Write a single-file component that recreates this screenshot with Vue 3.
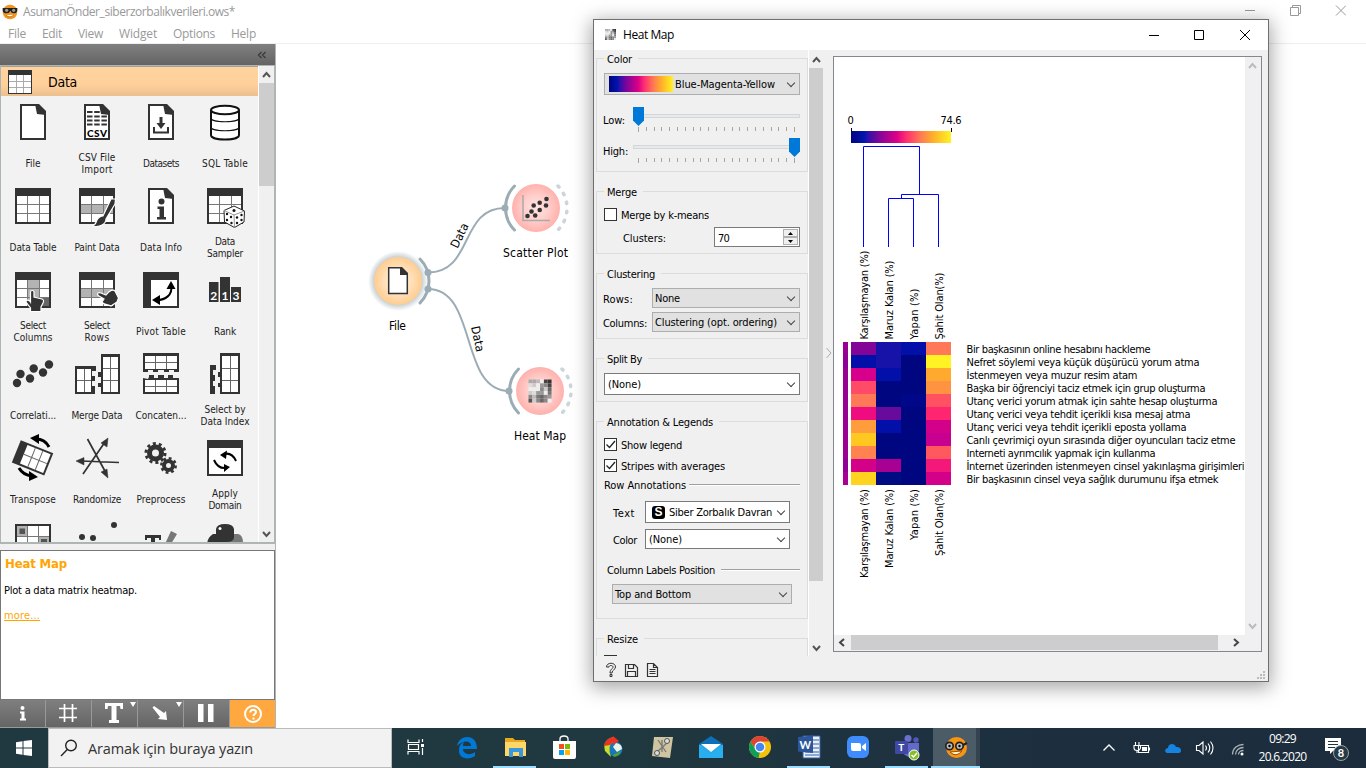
<script setup>
const vFit = {
  mounted(el, { value }) {
    const range = document.createRange()
    range.selectNodeContents(el)
    const natural = range.getBoundingClientRect().width
    el.style.letterSpacing = (value - natural) / el.textContent.length + 'px'
  },
}

const menus = [['File', 18, 16], ['Edit', 20, 16], ['View', 25, 16], ['Widget', 38, 16], ['Options', 42, 16], ['Help', 25, 0]]

const widgets = [
  { icon: 'file', lines: [['File', 15]] },
  { icon: 'csv', lines: [['CSV File', 37], ['Import', 31]] },
  { icon: 'datasets', lines: [['Datasets', 36]] },
  { icon: 'sql', lines: [['SQL Table', 46]] },
  { icon: 'table', lines: [['Data Table', 47]] },
  { icon: 'paint', lines: [['Paint Data', 45]] },
  { icon: 'info', lines: [['Data Info', 42]] },
  { icon: 'sampler', lines: [['Data', 20], ['Sampler', 36]] },
  { icon: 'columns', lines: [['Select', 26], ['Columns', 39]] },
  { icon: 'rows', lines: [['Select', 26], ['Rows', 25]] },
  { icon: 'pivot', lines: [['Pivot Table', 50]] },
  { icon: 'rank', lines: [['Rank', 22]] },
  { icon: 'corr', lines: [['Correlati...', 46]] },
  { icon: 'merge', lines: [['Merge Data', 51]] },
  { icon: 'concat', lines: [['Concaten...', 51]] },
  { icon: 'index', lines: [['Select by', 41], ['Data Index', 49]] },
  { icon: 'transpose', lines: [['Transpose', 46]] },
  { icon: 'random', lines: [['Randomize', 48]] },
  { icon: 'gears', lines: [['Preprocess', 49]] },
  { icon: 'apply', lines: [['Apply', 26], ['Domain', 33]] },
  { icon: 'impute', lines: [] },
  { icon: 'outliers', lines: [] },
  { icon: 'edit', lines: [] },
  { icon: 'python', lines: [] },
]
const isTable = (n) => ['table', 'paint', 'sampler', 'columns', 'rows'].includes(n)
const isPage = (n) => ['file', 'csv', 'datasets', 'info'].includes(n)

const ticks = Array.from({ length: 21 }, (_, i) => 5.5 + i * 7.8)

const heat = [
  ['#820598', '#1713a8', '#0210a9', '#ff7858'],
  ['#0210a9', '#1713a8', '#000580', '#fff324'],
  ['#d7008c', '#0210a9', '#000580', '#ffaa2e'],
  ['#ff4b68', '#000580', '#000580', '#ff9341'],
  ['#ff7858', '#000580', '#000788', '#ff5162'],
  ['#ef0b80', '#680a9c', '#000580', '#ff266f'],
  ['#ff9c3b', '#0210a9', '#000580', '#d3008a'],
  ['#ffc821', '#000580', '#000580', '#c70090'],
  ['#ff8250', '#000580', '#000580', '#ff585f'],
  ['#d3008a', '#a80093', '#000580', '#f4187a'],
  ['#ffd41f', '#000c82', '#000580', '#d3008a'],
]
const stripes = ['#970091', '#8f0096', '#970091', '#970091', '#970091', '#970091', '#9b0090', '#9b0090', '#9b0090', '#900095', '#a80093']
const rowLabels = [
  ['Bir başkasının online hesabını hackleme', 184],
  ['Nefret söylemi veya küçük düşürücü yorum atma', 233],
  ['İstenmeyen veya muzur resim atam', 171],
  ['Başka bir öğrenciyi taciz etmek için grup oluşturma', 239],
  ['Utanç verici yorum atmak için sahte hesap oluşturma', 251],
  ['Utanç verici veya tehdit içerikli kısa mesaj atma', 224],
  ['Utanç verici veya tehdit içerikli eposta yollama', 220],
  ['Canlı çevrimiçi oyun sırasında diğer oyuncuları taciz etme', 269],
  ['Interneti ayrımcılık yapmak için kullanma', 189],
  ['İnternet üzerinden istenmeyen cinsel yakınlaşma girişimleri', 278],
  ['Bir başkasının cinsel veya sağlık durumunu ifşa etmek', 252],
]
const colLabels = [
  ['Karşılaşmayan (%)', 89],
  ['Maruz Kalan (%)', 79],
  ['Yapan (%)', 51],
  ['Şahit Olan(%)', 67],
]
const mosaic = ['aabe43', 'dce984', 'eee8c6', 'cd99e7', '8b7689', '5c868e']
const mosaicCells = mosaic.flatMap((row, y) => [...row].map((c, x) => ({ x, y, c: '#' + c + c + c })))
const tasks = ['view', 'edge', 'folder', 'store', 'ball', 'script', 'mail', 'chrome', 'word', 'zoom', 'teams', 'orange']
const openTasks = ['folder', 'word', 'teams', 'orange']
</script>

<template>
  <div class="screen">
    <header class="titlebar">
      <svg class="appicon" width="16" height="16" viewBox="0 0 24 24">
        <circle cx="12" cy="12" r="11" fill="#f7941d" />
        <path d="M6 17Q12 22 18 16" fill="#fff" stroke="#a85000" />
        <path d="M1 6H23V10Q22 14 18 14Q14 14 12.500 10Q11 14 7 14Q2 14 1 10Z" fill="#222" />
        <circle cx="7" cy="9.500" r="2.400" fill="#999" /><circle cx="17.500" cy="9.500" r="2.400" fill="#999" />
      </svg>
      <span v-fit="212" class="apptitle">AsumanÖnder_siberzorbalıkverileri.ows*</span>
      <svg class="wincontrols" width="101" height="12" viewBox="0 0 101 12" fill="none" stroke="#999">
        <path d="M0 6.500H10M45.500 3.500H53.500V11.500H45.500ZM47.500 3.500V1.500H55.500V9.500H53.500M91 1.500L101 11.500M101 1.500L91 11.500" />
      </svg>
    </header>
    <nav class="menubar">
      <span v-for="m in menus" :key="m[0]" class="menuitem" :style="{ width: m[1] + m[2] + 'px' }"><span v-fit="m[1]">{{ m[0] }}</span></span>
    </nav>

    <main class="workspace">
      <aside class="sidebar">
        <div class="dockhead">
          <svg width="10" height="8" viewBox="0 0 10 8" fill="none" stroke="#3a3a3a" stroke-width="1.300"><path d="M4.500 1L1.500 4L4.500 7M8.500 1L5.500 4L8.500 7" /></svg>
        </div>
        <div class="toolbox">
          <div class="toolmain">
            <div class="category">
              <svg width="24" height="24" viewBox="0 0 24 24">
                <rect width="24" height="24" fill="#333" /><path d="M1 5H23V23H1Z" fill="#fff" />
                <path d="M1 11.500H23M1 17.500H23M8.500 5V23M15.500 5V23" stroke="#aaa" />
              </svg>
              <span v-fit="29">Data</span>
            </div>
            <div class="grid">
              <div v-for="w in widgets" :key="w.icon" class="cell">
                <svg class="wicon" width="48" height="48" viewBox="0 0 48 48">
                  <g v-if="isTable(w.icon)">
                    <rect x="6" y="6" width="36" height="36" fill="#333" /><rect x="8" y="14" width="32" height="26" fill="#fff" />
                    <rect v-if="w.icon === 'paint' || w.icon === 'rows'" x="8" y="22.500" width="32" height="9" fill="#b3b3b3" />
                    <rect v-if="w.icon === 'columns'" x="18.500" y="14" width="12" height="26" fill="#b3b3b3" />
                    <rect v-if="w.icon === 'columns'" x="30.500" y="31.500" width="9.500" height="8.500" fill="#666" />
                    <path d="M8 22.500H40M8 31.500H40M18.500 14V40M30.500 14V40" stroke="#777" />
                  </g>
                  <g v-if="isPage(w.icon)">
                    <path d="M12 7H28L36 14V41H12Z" fill="#fff" stroke="#333" stroke-width="2" />
                    <path d="M26 6H30L37 13V17L28 16Z" fill="#333" />
                  </g>
                  <g v-if="w.icon === 'csv'">
                    <path d="M14 14H27M14 18.500H34M14 22.500H34M14 26.500H34" stroke="#333" stroke-width="2" stroke-dasharray="5.500 1.700" />
                    <text x="14" y="38.500" font-size="10" font-weight="900" textLength="20" class="lato">CSV</text>
                  </g>
                  <g v-else-if="w.icon === 'datasets'" fill="#333">
                    <path d="M22.500 19H25.500V25H28.500L24 31L19.500 25H22.500Z" /><path d="M17 29V34.500H31V29" fill="none" stroke="#333" stroke-width="2" />
                  </g>
                  <g v-else-if="w.icon === 'sql'" fill="#fff" stroke="#111" stroke-width="2">
                    <path d="M10 12V37C10 43 38 43 38 37V12" /><ellipse cx="24" cy="12" rx="14" ry="4.200" />
                    <path d="M10 20C10 25 38 25 38 20M10 29C10 34 38 34 38 29" fill="none" stroke-width="1.200" />
                  </g>
                  <path v-else-if="w.icon === 'paint'" d="M38 17L42.500 17L42 22L33 37C33 42 27 46 19 44C23 43 23 40 24 38C26 35 28 34 30 34Z" fill="#333" stroke="#fff" stroke-width="1.200" />
                  <g v-else-if="w.icon === 'info'" fill="#333">
                    <circle cx="24.500" cy="19.500" r="3" /><path d="M20.500 24.500H27V35H29V37.500H20V35H22.500V27H20.500Z" />
                  </g>
                  <g v-else-if="w.icon === 'sampler'" stroke="#222" stroke-width="1" fill="#fff">
                    <path d="M33 24L43.500 29L43 40L33.500 45.500L23.500 40L23 28.500Z" /><path d="M23 28.500L33 33L43.500 29M33 33L33.500 45.500" fill="none" stroke="#999" />
                    <g fill="#111" stroke="none"><circle cx="33" cy="28.500" r="1.500" /><circle cx="26" cy="32" r="1.200" /><circle cx="26" cy="38" r="1.200" /><circle cx="30" cy="35" r="1.200" /><circle cx="30.500" cy="41" r="1.200" /><circle cx="36" cy="35.500" r="1.200" /><circle cx="36" cy="41" r="1.200" /><circle cx="40.500" cy="33" r="1.200" /><circle cx="40.500" cy="38" r="1.200" /></g>
                  </g>
                  <path v-else-if="w.icon === 'columns'" d="M21.500 26C21.500 24 25 24 25 26V31L33 33C35 34 35 35 34 37L32 41V45.500H21.500V42L17 36C17 33.500 20 33.500 21.500 36Z" fill="#333" stroke="#fff" stroke-width="1.200" />
                  <path v-else-if="w.icon === 'rows'" d="M25 27C24 28.500 25 29.500 26 30L31 33L29 36C30 39 35 38 38 40L44 36L45.500 32L42 25C40 23 37 24 33 29L28 27C27 26.400 26 26.500 25 27Z" fill="#333" stroke="#fff" stroke-width="1.200" />
                  <g v-else-if="w.icon === 'pivot'">
                    <rect x="6" y="6" width="36" height="36" fill="#333" /><rect x="14" y="14" width="26" height="26" fill="#fff" />
                    <path d="M34 20C36 29 28 34 20 34" fill="none" stroke="#000" stroke-width="2" /><path d="M34 15L38.500 23L29.500 23ZM15 34L23 29V39Z" />
                  </g>
                  <g v-else-if="w.icon === 'rank'">
                    <path d="M8 16H17.500V36H8ZM19 11H29V36H19ZM30 21H40V36H30Z" fill="#333" />
                    <g fill="#fff" font-size="12" font-weight="bold" class="lato"><text x="9.300" y="33.500">2</text><text x="20.500" y="33.500">1</text><text x="31.500" y="33.500">3</text></g>
                  </g>
                  <g v-else-if="w.icon === 'corr'" fill="#333">
                    <circle cx="8" cy="33" r="4.200" /><circle cx="11.500" cy="24" r="4.200" /><circle cx="21" cy="28.500" r="4.200" /><circle cx="24.700" cy="18.500" r="4.200" /><circle cx="34" cy="22.500" r="4.200" /><circle cx="40" cy="14.500" r="4.200" />
                  </g>
                  <g v-else-if="w.icon === 'merge'" fill="#333">
                    <path d="M2 16H23V21H19V26H22V31H19V36H22V44H2ZM28 4H47V44H28V37H25V33H28V27H25V22H28V17L28 15Z" />
                    <path d="M4 19H18V42H4ZM30 7H45V42H30Z" fill="#fff" /><path d="M4 30.500H18M11.500 19V42M30 18.500H45M30 30.500H45M37.500 7V42" stroke="#666" />
                  </g>
                  <g v-else-if="w.icon === 'concat'" fill="#333">
                    <path d="M6 3H42V22H37V20H32V22H27V20H21V22H16V20H11V22H6ZM6 28L11 29L12 27V25H17V28H21V25H27V28H31V25H36V28H42V44H6Z" />
                    <path d="M8 6H40V19H8ZM8 30H40V42H8Z" fill="#fff" /><path d="M8 12.500H40M8 36.500H40M18.500 6V19M29.500 6V19M18.500 30V42M29.500 30V42" stroke="#666" />
                  </g>
                  <g v-else-if="w.icon === 'index'" fill="#333">
                    <path d="M9 15H15V20H12V25H14V31H12V36H14V44H9ZM19 3H39V44H19V37H17V33H19V27H17V22H19Z" />
                    <path d="M21 6H37V42H21Z" fill="#fff" /><path d="M29.500 6V42M21 18.500H37M21 30.500H37" stroke="#666" />
                  </g>
                  <g v-else-if="w.icon === 'transpose'">
                    <g transform="rotate(22 24 24)"><rect x="6" y="12" width="35" height="24" fill="#333" /><path d="M14 14H39V34H14Z" fill="#fff" /><path d="M14 24H39M22.500 14V34M30.500 14V34" stroke="#666" /></g>
                    <path d="M27 5Q36 5 40 13M10 34Q14 41 23 42" fill="none" stroke="#000" stroke-width="3" /><path d="M21 4L30 0V10ZM29 43L20 37V47Z" />
                  </g>
                  <g v-else-if="w.icon === 'random'" stroke="#333" stroke-width="1.700" fill="#333">
                    <path d="M10 40L32 8M14.500 5L33 39M8 27L46 28.500" /><path d="M35 4L34 13L28 9ZM35 44L28 38L34 35ZM3 27L11 23.500V31Z" stroke-width=".5" />
                  </g>
                  <g v-else-if="w.icon === 'gears'" fill="none" stroke="#333">
                    <circle cx="18.500" cy="19" r="6" stroke-width="5" /><circle cx="18.500" cy="19" r="9.500" stroke-width="3" stroke-dasharray="3 2.970" />
                    <circle cx="31.500" cy="31.500" r="4.500" stroke-width="4" /><circle cx="31.500" cy="31.500" r="7.200" stroke-width="2.500" stroke-dasharray="2.800 2.855" />
                  </g>
                  <g v-else-if="w.icon === 'apply'">
                    <rect x="6" y="6" width="36" height="36" fill="#333" /><rect x="8" y="14" width="32" height="26" fill="#fff" />
                    <path d="M23 20Q31 18 35 27M13 26Q17 35 25 34" fill="none" stroke="#000" stroke-width="2" /><path d="M19 21L26 16.500L25 25ZM29 33L23 30V38Z" />
                  </g>
                  <g v-else-if="w.icon === 'impute'">
                    <rect x="6" y="6" width="36" height="36" fill="#333" /><rect x="8" y="8" width="32" height="32" fill="#fff" />
                    <path d="M8 8H18V18H8ZM30 19H40V30H30Z" fill="#b3b3b3" /><path d="M10.500 10.500H16V16H10.500ZM32 21H38V28H32Z" fill="#555" /><path d="M18.500 8V40M29.500 8V40M8 18.500H40" stroke="#777" />
                  </g>
                  <g v-else-if="w.icon === 'outliers'" fill="#333"><circle cx="41" cy="7" r="3" /><circle cx="9" cy="19" r="3" /><circle cx="20" cy="20" r="3" /></g>
                  <g v-else-if="w.icon === 'edit'" fill="#333"><path d="M8 17H24V22H22V20H18V32H14V20H10V22H8Z" /><path d="M34 13L40 16L34 26H28Z" fill="#777" /></g>
                  <g v-else-if="w.icon === 'python'"><path d="M30 16H37Q42 17 42 25V30H25Z" fill="#777" /><path d="M15 16V11Q16 6 24 6Q32 6 33 11V20Q32 24 26 24H18V34H8Q3 22 12 16Z" fill="#333" /><circle cx="19" cy="10.500" r="1.500" fill="#fff" /></g>
                </svg>
                <div class="wlabel"><div v-for="l in w.lines" :key="l[0]"><span v-fit="l[1]">{{ l[0] }}</span></div></div>
              </div>
            </div>
          </div>
          <div class="vscroll">
            <svg width="16" height="16" viewBox="0 0 16 16" fill="none" stroke="#555" stroke-width="2"><path d="M4 11L7.500 7L11 11" /></svg>
            <div class="thumb side"></div>
            <svg width="16" height="16" viewBox="0 0 16 16" fill="none" stroke="#555" stroke-width="2"><path d="M4 6L7.500 10L11 6" /></svg>
          </div>
        </div>
        <div class="splitter"></div>
        <section class="help">
          <h3><span v-fit="62">Heat Map</span></h3>
          <p><span v-fit="133">Plot a data matrix heatmap.</span></p>
          <a><span v-fit="36">more...</span></a>
        </section>
        <div class="tools">
          <div class="tool"><svg width="46" height="28" viewBox="0 0 46 28" fill="#fff"><circle cx="22.500" cy="8" r="2" /><path d="M20 11.500H24.500V18.500H26V20.500H20V18.500H21.500V13.500H20Z" /></svg></div>
          <div class="tool"><svg width="46" height="28" viewBox="0 0 46 28" stroke="#fff" stroke-width="1.700"><path d="M18.500 4V22M26.500 4V22M13 8.500H31M13 17.500H31" /></svg></div>
          <div class="tool"><svg width="46" height="28" viewBox="0 0 46 28" fill="#fff"><path d="M13 3H31V9H28.500L28 6H24.500V20H27V23H17V20H19.500V6H16L15.500 9H13ZM38 2H44L41 7Z" /></svg></div>
          <div class="tool"><svg width="46" height="28" viewBox="0 0 46 28" fill="#fff"><path d="M16 6L26 13L28 11L29 20L20 19L22 17L14.500 7.500ZM38 2H44L41 7Z" /></svg></div>
          <div class="tool"><svg width="46" height="28" viewBox="0 0 46 28" fill="#fff"><path d="M14 4H19.500V22H14ZM24 4H29.500V22H24Z" /></svg></div>
          <div class="tool on"><svg width="46" height="28" viewBox="0 0 46 28" fill="none" stroke="#fff" stroke-width="2"><circle cx="23" cy="14" r="8" /><path d="M20.500 12.500C20 9 26 9 26 12C26 14 23.500 14 23.500 16" /><path d="M23.500 17.500V19.500" /></svg></div>
        </div>
      </aside>

      <svg class="canvas" width="1090" height="684" viewBox="276 44 1090 684">
        <defs>
          <radialGradient id="pink"><stop offset="0" stop-color="#ffe3e1" /><stop offset=".5" stop-color="#ffd0cd" /><stop offset="1" stop-color="#ffb1ac" /></radialGradient>
          <radialGradient id="peach"><stop offset="0" stop-color="#fff1e2" /><stop offset=".5" stop-color="#ffe2c0" /><stop offset="1" stop-color="#ffcd90" /></radialGradient>
          <radialGradient id="halo"><stop offset=".76" stop-color="#9cacb4" stop-opacity=".65" /><stop offset="1" stop-color="#9cacb4" stop-opacity="0" /></radialGradient>
        </defs>
        <g fill="none" stroke="#9cacb4" stroke-width="2">
          <path d="M428 272.500C474 272.500 459 208 505 208M428 289C478 289 459 391 509 391" />
          <path d="M420 259A31.400 31.400 0 0 1 420 303M514.500 186A31.400 31.400 0 0 0 514.500 230M518.500 369A31.400 31.400 0 0 0 518.500 413" stroke-width="3" stroke-linecap="round" />
          <path d="M558 186A31.400 31.400 0 0 1 558 230M562 369A31.400 31.400 0 0 1 562 413" stroke="#ccd5da" stroke-width="3.500" stroke-linecap="round" stroke-dasharray="1.500 7.700" />
        </g>
        <g fill="#9cacb4"><circle cx="428" cy="272.500" r="3.500" /><circle cx="428" cy="289" r="3.500" /><circle cx="505" cy="208" r="3.500" /><circle cx="509" cy="391" r="3.500" /></g>
        <circle cx="398" cy="281" r="30" fill="url(#halo)" />
        <circle cx="398" cy="281" r="24" fill="url(#peach)" /><circle cx="536" cy="208" r="24" fill="url(#pink)" /><circle cx="540" cy="391" r="24" fill="url(#pink)" />
        <path d="M388.700 267.700H401L407.300 274V293.500H388.700Z" fill="#fff" stroke="#333" stroke-width="1.500" /><path d="M400 267H402L408 273V275H400Z" fill="#333" />
        <path d="M523 195V220.500H550" fill="none" stroke="#aaa" stroke-width="1.500" />
        <g fill="#333"><circle cx="527.500" cy="216" r="2.300" /><circle cx="531.500" cy="211.500" r="2.300" /><circle cx="535.200" cy="215.500" r="2.300" /><circle cx="533.700" cy="205.500" r="2.300" /><circle cx="539.700" cy="202.700" r="2.300" /><circle cx="539.700" cy="210" r="2.300" /><circle cx="546" cy="205.500" r="2.300" /><circle cx="546.500" cy="199" r="2.300" /></g>
        <rect v-for="m in mosaicCells" :key="m.x + '-' + m.y" :x="528.500 + m.x * 3.850" :y="379.500 + m.y * 3.850" width="3.800" height="3.800" :fill="m.c" />
        <g class="nodetext">
          <text x="389" y="330" textLength="17">File</text><text x="503" y="257" textLength="65">Scatter Plot</text><text x="514" y="440" textLength="52">Heat Map</text>
          <text transform="translate(457.500 249) rotate(-64)" textLength="26">Data</text><text transform="translate(471 327) rotate(78)" textLength="26">Data</text>
        </g>
      </svg>
    </main>

    <section class="dialog">
      <header class="dtitle">
        <svg width="11" height="11" viewBox="0 0 6 6"><rect v-for="m in mosaicCells" :key="m.x + '-' + m.y" :x="m.x" :y="m.y" width="1.050" height="1.050" :fill="m.c" /></svg>
        <span v-fit="51">Heat Map</span>
        <svg class="dcontrols" width="101" height="12" viewBox="0 0 101 12" fill="none" stroke="#000"><path d="M0 6.500H10M45.500 1.500H54.500V10.500H45.500ZM91 1L101 11M101 1L91 11" /></svg>
      </header>
      <div class="dbody">
        <div class="controls">
          <div class="scrollarea">
            <div class="groups">
              <div class="group color">
                <div class="gtitle"><span v-fit="25">Color</span></div>
                <div class="combo tall"><i class="ramp"></i><span v-fit="100">Blue-Magenta-Yellow</span><b class="chev"></b></div>
                <div v-for="s in [['Low:', 22, 0], ['High:', 25, 156]]" :key="s[0]" class="sliderrow">
                  <span v-fit="s[1]">{{ s[0] }}</span>
                  <svg width="167" height="26" viewBox="0 0 167 26">
                    <rect x=".5" y="7.500" width="166" height="3" fill="#e7eaea" stroke="#d3d7d7" />
                    <path v-for="(t, i) in ticks" :key="i" :d="'M' + (Math.floor(t) + .5) + ' 20V' + (i % 20 ? 24 : 25)" stroke="#aaa496" />
                    <path :transform="'translate(' + s[2] + ' 0)'" d="M0 0H11V13.500L5.500 19L0 13.500Z" fill="#0078d7" />
                  </svg>
                </div>
              </div>
              <div class="group merge">
                <div class="gtitle"><span v-fit="30">Merge</span></div>
                <div class="check"><i class="box"></i><span v-fit="88">Merge by k-means</span></div>
                <div class="spinrow"><span v-fit="43">Clusters:</span>
                  <div class="spin"><span v-fit="11">70</span><div class="spinbtns"><i><svg width="5" height="3"><path d="M0 3H5L2.500 0Z" /></svg></i><i><svg width="5" height="3"><path d="M0 0H5L2.500 3Z" /></svg></i></div></div>
                </div>
              </div>
              <div class="group clustering">
                <div class="gtitle"><span v-fit="48">Clustering</span></div>
                <div class="formrow"><label><span v-fit="30">Rows:</span></label><div class="combo"><span v-fit="25">None</span><b class="chev"></b></div></div>
                <div class="formrow"><label><span v-fit="44">Columns:</span></label><div class="combo"><span v-fit="122">Clustering (opt. ordering)</span><b class="chev"></b></div></div>
              </div>
              <div class="group split">
                <div class="gtitle"><span v-fit="35">Split By</span></div>
                <div class="combo tall white"><span v-fit="33">(None)</span><b class="chev"></b></div>
              </div>
              <div class="group annotation">
                <div class="gtitle"><span v-fit="106">Annotation &amp; Legends</span></div>
                <div class="check"><i class="box"><svg width="11" height="11"><path d="M1.500 5.500L4.500 8.500L10 2" fill="none" stroke="#222" stroke-width="1.300" /></svg></i><span v-fit="61">Show legend</span></div>
                <div class="check second"><i class="box"><svg width="11" height="11"><path d="M1.500 5.500L4.500 8.500L10 2" fill="none" stroke="#222" stroke-width="1.300" /></svg></i><span v-fit="104">Stripes with averages</span></div>
                <div class="rule first"><span v-fit="82">Row Annotations</span><hr /></div>
                <div class="annrow text"><label><span v-fit="22">Text</span></label><div class="combo tall white"><em class="sicon">S</em><span v-fit="103">Siber Zorbalık Davran</span><b class="chev"></b></div></div>
                <div class="annrow colour"><label><span v-fit="24">Color</span></label><div class="combo white"><span v-fit="33">(None)</span><b class="chev"></b></div></div>
                <div class="rule last"><span v-fit="108">Column Labels Position</span><hr /></div>
                <div class="combo pos"><span v-fit="76">Top and Bottom</span><b class="chev"></b></div>
              </div>
              <div class="group resize">
                <div class="gtitle"><span v-fit="31">Resize</span></div>
                <div class="check"><i class="box"></i></div>
              </div>
            </div>
            <div class="vscroll panel">
              <svg width="15" height="18" viewBox="0 0 15 18" fill="none" stroke="#555" stroke-width="2"><path d="M4 12L7.500 8L11 12" /></svg>
              <div class="thumb long"></div>
              <svg width="15" height="18" viewBox="0 0 15 18" fill="none" stroke="#555" stroke-width="2"><path d="M4 8L7.500 12L11 8" /></svg>
            </div>
          </div>
          <div class="footer">
            <svg width="60" height="16" viewBox="0 0 60 16" fill="none" stroke="#333" stroke-width="1.200">
              <path d="M1.500 5C1.500 0 10.500 0 10.500 5C10.500 8 7 7.500 7 11H5C5 7 8 7 8 5C8 3 4 3 4 5ZM5 12.500H7V14.500H5Z" stroke-width="1" />
              <path d="M20.500 2.500H29.500L32.500 5.500V14.500H20.500ZM23.500 2.500V6.500H28.500V2.500M22.500 14.500V9.500H30.500V14.500" />
              <path d="M42.500 1.500H48.500L52.500 5.500V14.500H42.500ZM48.500 1.500V5.500H52.500M44.500 7.500H50.500M44.500 9.500H50.500M44.500 11.500H50.500" />
            </svg>
          </div>
        </div>
        <div class="handle"><svg width="6" height="12" fill="none" stroke="#aaa"><path d="M.5 1L5 6L.5 11" /></svg></div>
        <div class="view">
          <div class="viewmain">
            <svg class="plot" width="411" height="578" viewBox="834 57 411 578">
              <defs><linearGradient id="legend"><stop offset="0" stop-color="#000580" /><stop offset=".14" stop-color="#0215b0" /><stop offset=".16" stop-color="#2810aa" /><stop offset=".28" stop-color="#80059a" /><stop offset=".46" stop-color="#dc0086" /><stop offset=".55" stop-color="#ff2d70" /><stop offset=".7" stop-color="#ff7c52" /><stop offset=".82" stop-color="#ffaf2a" /><stop offset="1" stop-color="#fff324" /></linearGradient></defs>
              <g class="plottext">
                <text x="847.500" y="124" textLength="6">0</text><text x="940.500" y="124" textLength="21">74.6</text>
                <path d="M851.500 128V132M951.500 128V132" stroke="#000" />
                <rect x="851" y="131" width="100" height="12" fill="url(#legend)" />
                <path d="M863.500 247V146.500H919.500V194.500M901.500 198V194.500H938.500V247M888.500 247V198.500H913.500V247" fill="none" stroke="#0000ff" />
                <g v-for="(c, i) in colLabels" :key="c[0]">
                  <text :transform="'translate(' + (868 + i * 25) + ' 339.500) rotate(-90)'" :textLength="c[1]">{{ c[0] }}</text>
                  <text :transform="'translate(' + (868 + i * 25) + ' ' + (489 + c[1]) + ') rotate(-90)'" :textLength="c[1]">{{ c[0] }}</text>
                </g>
                <g v-for="(r, i) in heat" :key="i">
                  <rect x="843" :y="342 + i * 13" width="5" height="13" :fill="stripes[i]" />
                  <rect v-for="(c, j) in r" :key="j" :x="851 + j * 25" :y="342 + i * 13" width="25" height="13" :fill="c" />
                  <text x="966.500" :y="353 + i * 13" :textLength="rowLabels[i][1]">{{ rowLabels[i][0] }}</text>
                </g>
              </g>
            </svg>
            <div class="vscroll plotbar">
              <svg width="16" height="18" viewBox="0 0 16 18" fill="none" stroke="#bbb" stroke-width="2"><path d="M4 11L7.500 7L11 11" /></svg>
              <svg width="16" height="18" viewBox="0 0 16 18" fill="none" stroke="#bbb" stroke-width="2"><path d="M4 7L7.500 11L11 7" /></svg>
            </div>
          </div>
          <div class="hscroll">
            <svg width="17" height="15" fill="none" stroke="#444" stroke-width="2"><path d="M10 4L6 7.500L10 11" /></svg>
            <div class="hthumb"></div>
            <svg width="10" height="15" fill="none" stroke="#444" stroke-width="2"><path d="M1 4L5 7.500L1 11" /></svg>
          </div>
        </div>
        <svg class="grip" width="8" height="8" fill="#bbb"><path d="M6 0H8V2H6ZM3 3H5V5H3ZM6 3H8V5H6ZM0 6H2V8H0ZM3 6H5V8H3ZM6 6H8V8H6Z" /></svg>
      </div>
    </section>

    <footer class="taskbar">
      <div class="start"><svg width="16" height="16" viewBox="0 0 16 16" fill="#fff"><path d="M0 2.200L6.500 1.200V7.500H0ZM7.500 1L16 0V7.500H7.500ZM0 8.500H6.500V14.800L0 13.800ZM7.500 8.500H16V16L7.500 15Z" /></svg></div>
      <div class="search">
        <svg width="18" height="18" viewBox="0 0 18 18" fill="none" stroke="#222" stroke-width="1.400"><circle cx="11" cy="6.500" r="5.300" /><path d="M7.300 10.500L1 17" /></svg>
        <span v-fit="165">Aramak için buraya yazın</span>
      </div>
      <div v-for="t in tasks" :key="t" class="task" :class="{ open: openTasks.includes(t), active: t === 'orange' }">
        <svg width="28" height="28" viewBox="0 0 28 28">
          <g v-if="t === 'view'" fill="none" stroke="#fff" stroke-width="1.200"><path d="M5 6.500V9.500H16V6.500M5 21.500V18.500H16V21.500M5.500 11.500H15.500V16.500H5.500ZM19.500 6V9M19.500 15V22" /><path d="M18 11H21V14H18Z" fill="#fff" stroke="none" /></g>
          <path v-else-if="t === 'edge'" d="M5 13C6 7 11 4 15 4C22 4 25 9 25 16H11C11 21 18 23 23 19V23C16 28 6 25 7 17C7 12 10 10 12 9C11 11 11 12 11 13H19C19 7 11 7 5 13Z" fill="#0078d7" />
          <g v-else-if="t === 'folder'"><path d="M4 5H12L14 7H24V23H4Z" fill="#e8a820" /><path d="M4 9H25V23H4Z" fill="#ffd768" /><path d="M8 15H22V24H18V19H12V24H8Z" fill="#3a96dd" /></g>
          <g v-else-if="t === 'store'"><path d="M10 9V6C10 2 18 2 18 6V9" fill="none" stroke="#fff" stroke-width="1.300" /><path d="M3 8H26V24Q26 26 24 26H5Q3 26 3 24Z" fill="#fff" /><path d="M9 11H14V16H9Z" fill="#f25022" /><path d="M15 11H20V16H15Z" fill="#7fba00" /><path d="M9 17H14V22H9Z" fill="#00a4ef" /><path d="M15 17H20V22H15Z" fill="#ffb900" /></g>
          <g v-else-if="t === 'ball'"><circle cx="16" cy="16" r="7.500" fill="#1877b8" /><path d="M14 4Q3 7 6 18L12 24Q8 12 14 9Z" fill="#c7de2a" /><path d="M14 4Q6 6 5 13L11 12L14 9V12L20 8L14 3Z" fill="#e83226" /><path d="M17 10Q23 11 23 16L18 19L14 14Z" fill="#e9f3e6" /><path d="M14 22L22 18Q20 23 15 24Z" fill="#54a329" /></g>
          <g v-else-if="t === 'script'"><path d="M6 4H25L22 25L4 23Z" fill="#cfc5a1" /><path d="M10 7L18 19M20 9L9 19M14 7V19" stroke="#777" stroke-width="1.300" /><circle cx="9" cy="20" r="2.500" fill="#ddd" stroke="#555" /><circle cx="19" cy="8" r="2.500" fill="#ddd" stroke="#555" /></g>
          <g v-else-if="t === 'mail'"><path d="M2 11L14 3L26 11V25H2Z" fill="#0d6fb8" /><path d="M2 12H26V25H2Z" fill="#27a8ea" /><path d="M4 11H24L14 19Z" fill="#fff" /><path d="M2 12L14 21L26 12V25H2Z" fill="#29aff0" /></g>
          <g v-else-if="t === 'chrome'"><circle cx="14" cy="14" r="11" fill="#f4c20d" /><path d="M4.500 8.500A11 11 0 0 1 23.500 8.500H14L9 15Z" fill="#db4437" /><path d="M4.500 8.500L10 17L14 18L12.500 25A11 11 0 0 1 4.500 8.500Z" fill="#0f9d58" /><circle cx="14" cy="14" r="5.500" fill="#fff" /><circle cx="14" cy="14" r="4.300" fill="#4285f4" /></g>
          <g v-else-if="t === 'word'"><path d="M8 3H25V25H8Z" fill="#eaf0f8" stroke="#315ea9" /><path d="M16 7H24M16 11H24M16 15H24M10 19H24M10 22H24" stroke="#315ea9" /><path d="M3 4L18 2.500V20L3 18.500Z" fill="#2b579a" /><text x="4.500" y="15.500" font-size="11" font-weight="bold" fill="#fff" class="lato">W</text></g>
          <g v-else-if="t === 'zoom'"><rect x="3" y="3" width="22" height="22" rx="6" fill="#3f8cff" /><path d="M7 10H15Q17 10 17 12V18H9Q7 18 7 16ZM18 13L22 10V18L18 15Z" fill="#fff" /></g>
          <g v-else-if="t === 'teams'"><circle cx="15" cy="5.500" r="3.500" fill="#6a6fcd" /><circle cx="23" cy="7" r="2.700" fill="#5058b8" /><path d="M9 10H26V18Q22 24 16 24Q10 22 9 18Z" fill="#6269c7" /><rect x="2" y="8" width="13" height="13" rx="1" fill="#4048a5" /><text x="5.300" y="18" font-size="10" font-weight="bold" fill="#fff" class="lato">T</text><circle cx="21" cy="22" r="5" fill="#84bd28" stroke="#fff" /><path d="M18.500 22L20.500 24L24 20" fill="none" stroke="#fff" stroke-width="1.500" /></g>
          <g v-else><circle cx="14.500" cy="14.500" r="10.500" fill="#f79412" /><path d="M8 19Q14 25 20 18Z" fill="#fff8d0" stroke="#a04c00" /><circle cx="7.500" cy="13" r="3.700" fill="#bbb" stroke="#222" stroke-width="1.700" /><circle cx="17.500" cy="13" r="3.700" fill="#bbb" stroke="#222" stroke-width="1.700" /><circle cx="7.500" cy="13" r="1.200" /><circle cx="17.500" cy="13" r="1.200" /><path d="M21 12L25 10" stroke="#222" stroke-width="2" /></g>
        </svg>
      </div>
      <div class="tray">
        <svg width="146" height="24" viewBox="0 0 146 24" fill="none" stroke="#fff" stroke-width="1.300">
          <path d="M3.500 14.500L9 9L14.500 14.500" />
          <path d="M38.500 9.500H48.500V16.500H38.500ZM49.500 11.500V14.500M35.500 6V10M39 6V10M34 9.500H40.500V12Q40 14.500 37 14.500Q34 14.500 34 12ZM37 14.500V17" stroke-width="1.100" /><path d="M42 11H47V15H42Z" fill="#fff" stroke="none" />
          <path d="M67 17C64 16 65 12 68 12C68 8 74 6 76 11C81 10 83 16 79 17Z" fill="#1583e0" stroke="none" />
          <path d="M96.500 9.500H99L103 6V18L99 14.500H96.500ZM105.500 9.500Q107.500 12 105.500 14.500M108 7.500Q111.500 12 108 16.500M110.500 5.500Q115.500 12 110.500 18.500" stroke-width="1.100" />
          <path d="M132.500 18.500C132.500 12 138 8.500 143.500 8.500M135.500 18.500C135.500 14.500 139 11.500 143.500 11.500M138.500 18.500C138.500 16.500 140.500 14.500 143.500 14.500" stroke="#aab3b8" /><circle cx="142" cy="18" r="1.500" fill="#fff" stroke="none" />
        </svg>
        <div class="clock"><div><span v-fit="27">09:29</span></div><div><span v-fit="48">20.6.2020</span></div></div>
        <div class="notif">
          <svg width="26" height="26" viewBox="0 0 26 26"><path d="M1 3H17V16H9L6 19V16H1Z" fill="#fff" /><path d="M4 6.500H14M4 9.500H14M4 12.500H11" stroke="#20343e" /><circle cx="17" cy="18" r="7.500" fill="#273944" stroke="#9aa4aa" /><text x="13.800" y="22" font-size="11" font-weight="bold" fill="#fff" class="lato">8</text></svg>
        </div>
      </div>
    </footer>
  </div>
</template>

<style>
html, body { margin: 0; overflow: hidden; background: #fff; }
</style>

<style scoped>
.screen { width: 1366px; height: 768px; position: relative; display: flex; flex-direction: column; background: #fff; overflow: hidden; font: 11px "DejaVu Sans Condensed", "DejaVu Sans", sans-serif; font-stretch: condensed; color: #000; white-space: nowrap; }
.screen * { box-sizing: border-box; }
svg { display: block; flex: none; }
.lato { font-family: Lato, sans-serif; }
.titlebar { height: 23px; display: flex; align-items: center; color: #999; font: 12px "Open Sans", sans-serif; padding-left: 2px; flex: none; }
.apptitle { margin-left: 5px; }
.wincontrols { margin-left: auto; margin-right: 20px; margin-top: -3px; }
.menubar { height: 21px; display: flex; align-items: center; padding-left: 8px; color: #999; font: 12px "Open Sans", sans-serif; border-bottom: 1px solid #eee; flex: none; }
.menuitem { display: block; }
.workspace { display: flex; height: 684px; flex: none; }
.sidebar { width: 276px; display: flex; flex-direction: column; border-right: 1px solid #adb5b5; flex: none; background: #f0f0f0; }
.dockhead { height: 21px; background: linear-gradient(#808080, #646464); display: flex; justify-content: flex-end; align-items: center; padding-right: 8px; }
.toolbox { height: 479px; border: 1px solid #adb5b5; border-bottom-width: 2px; display: flex; overflow: hidden; background: #f2f2f2; flex: none; }
.toolmain { width: 257px; }
.category { height: 30px; border-top: 1px solid #a5a094; background: linear-gradient(#ffd39f 0%, #ffd09a 60%, #ebc08f); display: flex; align-items: center; padding-left: 7px; font-size: 14px; }
.category span { margin-left: 16px; }
.grid { display: grid; grid-template-columns: repeat(4, 64px); grid-auto-rows: 84px; padding-top: 2px; }
.cell { display: flex; flex-direction: column; align-items: center; overflow: hidden; }
.wlabel { height: 36px; display: flex; flex-direction: column; justify-content: center; font-size: 10px; line-height: 12px; color: #222; text-align: center; }
.vscroll { width: 16px; display: flex; flex-direction: column; background: #f0f0f0; border-left: 1px solid #fff; }
.thumb { background: #cdcdcd; width: 15px; }
.side { height: 103px; margin-bottom: auto; margin-top: 1px; }
.splitter { height: 6px; background: #f0f0f0; flex: none; }
.help { height: 150px; border: 1px solid #777; background: #fff; padding: 4px 4px; flex: none; }
.help h3 { margin: 0; font-size: 13px; line-height: 18px; color: #ffa500; }
.help p { margin: 10px 0 0 -1px; line-height: 16px; }
.help a { display: block; line-height: 16px; margin: 9px 0 0 -1px; color: #ffa500; text-decoration: underline; }
.tools { height: 28px; display: flex; background: linear-gradient(#7f7f7f, #646464); }
.tool { width: 46px; border-right: 1px solid #999; border-bottom: 1px solid #999; overflow: hidden; }
.tool.on { background: #ffa840; border-right: 0; width: 45px; }
.canvas { background: #fff; }
.nodetext { font-size: 12px; }
.dialog { position: absolute; left: 593px; top: 19px; width: 676px; height: 663px; border: 1px solid #6f6f6f; background: #f0f0f0; box-shadow: 0 4px 18px 2px rgba(0, 0, 0, .35); }
.dtitle { height: 30px; background: #fff; display: flex; align-items: center; padding: 0 0 1px 11px; font: 12px "Open Sans", sans-serif; }
.dtitle span { margin-left: 7px; }
.dcontrols { margin-left: auto; margin-right: 18px; }
.dbody { display: flex; height: 631px; position: relative; }
.controls { width: 229px; }
.controls span { padding-top: 2px; }
.scrollarea { height: 606px; display: flex; overflow: hidden; }
.groups { width: 214px; padding: 8px 0 0 2px; }
.group { border: 1px solid #dcdcdc; position: relative; margin-bottom: 19px; padding-left: 7px; padding-right: 7px; }
.gtitle { position: absolute; top: -7px; left: 7px; background: #f0f0f0; padding: 0 6px 0 3px; line-height: 16px; }
.color { height: 114px; padding-top: 14px; }
.merge { height: 63px; padding-top: 16px; }
.clustering { height: 66px; padding-top: 14px; }
.split { height: 44px; padding-top: 14px; }
.annotation { height: 198px; padding-top: 16px; }
.resize { height: 80px; padding-top: 16px; }
.combo { height: 20px; border: 1px solid #adadad; background: #e1e1e1; display: flex; align-items: center; padding: 0 4px 0 2px; overflow: hidden; line-height: 16px; }
.combo.tall { height: 22px; }
.combo.white { background: #fff; border-color: #7a7a7a; padding-left: 3px; }
.chev { width: 6px; height: 6px; border: solid #444; border-width: 0 1px 1px 0; transform: rotate(45deg); margin: -3px 1px 0 auto; flex: none; }
.ramp { width: 64px; height: 16px; margin: 0 2px; flex: none; background: linear-gradient(90deg, #000580, #0215b0 14%, #2810aa 16%, #80059a 28%, #dc0086 46%, #ff2d70 55%, #ff7c52 70%, #ffaf2a 82%, #fff324); }
.color .combo { margin-bottom: 12px; }
.sliderrow { display: flex; justify-content: space-between; height: 31px; line-height: 23px; margin-left: -1px; }
.check { height: 13px; display: flex; align-items: center; }
.check.second { margin-top: 8px; }
.box { width: 13px; height: 13px; background: #fff; border: 1px solid #333; margin-right: 4px; flex: none; }
.spinrow { display: flex; justify-content: space-between; align-items: center; height: 20px; margin: 6px 0 0 19px; }
.spin { width: 86px; height: 20px; border: 1px solid #7a7a7a; background: #fff; display: flex; justify-content: space-between; align-items: center; padding: 1px 1px 1px 3px; }
.spinbtns { width: 15px; }
.spinbtns i { height: 8px; border: 1px solid #b0b0b0; background: #efefef; display: flex; align-items: center; justify-content: center; }
.formrow { display: flex; height: 20px; align-items: center; margin-bottom: 4px; }
.formrow label { width: 48px; text-indent: -1px; padding-top: 2px; }
.formrow .combo { width: 148px; }
.rule { height: 16px; display: flex; align-items: center; justify-content: space-between; }
.rule span { padding-top: 0; }
.rule hr { margin: -1px 0 0; border: 0; border-top: 1px solid #a0a0a0; border-bottom: 1px solid #fff; }
.first { margin-top: 5px; }
.first hr { width: 111px; }
.last { margin: 13px 0 0 3px; }
.last hr { width: 79px; }
.annrow { display: flex; align-items: center; }
.annrow label { width: 41px; padding: 2px 0 0 9px; }
.annrow .combo { width: 145px; }
.text { margin-top: 8px; }
.colour { margin-top: 6px; }
.sicon { width: 13px; height: 13px; border-radius: 3px; background: #000; color: #fff; font: bold 12px/13px "Liberation Sans", sans-serif; text-align: center; margin: 0 4px 0 3px; flex: none; }
.pos { width: 180px; margin: 6px 0 0 8px; }
.panel { width: 15px; justify-content: space-between; }
.long { height: 513px; margin-bottom: auto; }
.footer { height: 25px; padding: 6px 0 0 11px; }
.handle { width: 10px; display: flex; align-items: center; padding: 0 0 25px 3px; }
.view { width: 429px; height: 596px; margin-top: 6px; border: 1px solid #828790; background: #f0f0f0; }
.viewmain { display: flex; height: 578px; }
.plot { background: #fff; }
.plottext { font-size: 11px; }
.plotbar { justify-content: space-between; border: 0; }
.hscroll { display: flex; height: 16px; width: 411px; }
.hthumb { width: 367px; height: 15px; background: #cdcdcd; margin-right: 15px; flex: none; }
.grip { position: absolute; right: 3px; bottom: 2px; }
.taskbar { height: 40px; display: flex; background: linear-gradient(90deg, #203941, #20383f 45%, #1d3040 70%, #1c2c3c); flex: none; color: #fff; font: 12px "Open Sans", sans-serif; }
.start { width: 48px; display: flex; align-items: center; justify-content: center; }
.search { width: 344px; border: 1px solid #bbb; background: #f2f2f2; display: flex; align-items: center; padding-left: 11px; color: #333; font-size: 14.500px; }
.search span { margin-left: 10px; }
.task { width: 49px; display: flex; align-items: center; justify-content: center; border-bottom: 2px solid transparent; background-clip: padding-box; }
.task.open { border-image: linear-gradient(90deg, transparent 9%, #9bdcff 9%, #9bdcff 91%, transparent 91%) 2; border-width: 0 0 2px; border-style: solid; }
.task.active { background: linear-gradient(90deg, transparent 2px, #4b5c67 2px, #4b5c67 45px, #34434f 45px); border-image: none; border-color: #9bdcff; }
.tray { margin-left: auto; display: flex; align-items: center; width: 266px; }
.clock { width: 73px; text-align: center; line-height: 18px; }
.notif { padding-left: 5px; }
</style>
